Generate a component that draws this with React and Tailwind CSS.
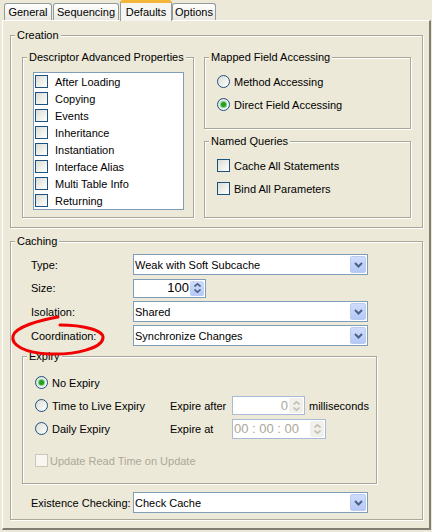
import React from "react";

const BG = "bg-[#ECE9D8]";

function Tab({ label, selected, className = "" }) {
  if (selected) {
    return (
      <div
        className={`relative z-10 -mb-[1px] h-[21px] flex items-center justify-center rounded-t-[3px] border-x border-[#919B9C] border-t-[3px] border-t-[#F5B53A] bg-[#F6F5F0] ${className}`}
      >
        {label}
      </div>
    );
  }
  return (
    <div
      className={`h-[17px] flex items-center justify-center pt-[1px] rounded-t-[3px] border border-b-0 border-[#919B9C] bg-gradient-to-b from-white to-[#E8E7E0] ${className}`}
    >
      {label}
    </div>
  );
}

function Group({ label, className = "", children }) {
  return (
    <fieldset
      className={`min-w-0 border border-[#A9A799] shadow-[inset_1px_1px_0_#fff,1px_1px_0_#fff] ${className}`}
    >
      <legend className={`ml-[4px] px-[2px] leading-[13px] ${BG}`}>{label}</legend>
      {children}
    </fieldset>
  );
}

function Check({ disabled }) {
  return (
    <span
      className={`block w-[13px] h-[13px] shrink-0 border ${
        disabled
          ? "border-[#CAC8BB] bg-[#F7F6F1]"
          : "border-[#1C5180] bg-gradient-to-br from-[#DCDCD5] to-white"
      }`}
    />
  );
}

function Radio({ checked }) {
  return (
    <span className="flex w-[13px] h-[13px] shrink-0 items-center justify-center rounded-full border border-[#1C5180] bg-gradient-to-br from-[#DCDCD5] to-white">
      {checked && (
        <span className="block w-[5px] h-[5px] rounded-full bg-[#21A121] shadow-[0_0_0_1px_#7FD27F]" />
      )}
    </span>
  );
}

function Chevron({ color = "#4D6185", up }) {
  return (
    <svg width="7" height="4" viewBox="0 0 7 4">
      <polyline
        points={up ? "0.5,3.5 3.5,0.8 6.5,3.5" : "0.5,0.5 3.5,3.2 6.5,0.5"}
        fill="none"
        stroke={color}
        strokeWidth="1.6"
      />
    </svg>
  );
}

function Combo({ value }) {
  return (
    <div className="w-[235px] h-[21px] flex items-center border border-[#7F9DB9] bg-white">
      <span className="flex-1 pl-[1px] pt-[1px]">{value}</span>
      <span className="mr-[1px] flex w-[16px] h-[17px] items-center justify-center rounded-[2px] border border-[#B9CBF3] bg-gradient-to-b from-[#CFDCFD] to-[#B5C8F6]">
        <svg width="9" height="6" viewBox="0 0 9 6">
          <polyline points="1,1 4.5,4.5 8,1" fill="none" stroke="#4D6185" strokeWidth="2" />
        </svg>
      </span>
    </div>
  );
}

function Spinner({ value, disabled, width = "w-[73px]", align = "right" }) {
  return (
    <div
      className={`${width} h-[19px] flex items-stretch border ${
        disabled ? "border-[#A9BBD4] bg-white text-[#ACA899]" : "border-[#7F9DB9] bg-white"
      }`}
    >
      <span
        className={`flex-1 flex items-center px-[1px] text-[13px] ${
          align === "right" ? "justify-end" : ""
        }`}
      >
        {value}
      </span>
      <span
        className={`my-[1px] mr-[1px] flex w-[14px] flex-col items-center justify-center gap-[2px] rounded-[2px] ${
          disabled ? "bg-[#F1F0EA]" : "bg-gradient-to-b from-[#CFDCFD] to-[#B5C8F6]"
        }`}
      >
        <Chevron up color={disabled ? "#C3C1B4" : "#4D6185"} />
        <Chevron color={disabled ? "#C3C1B4" : "#4D6185"} />
      </span>
    </div>
  );
}

function FieldRow({ label, children, className = "" }) {
  return (
    <div className={`flex items-center pl-[20px] ${className}`}>
      <span className="w-[102px] shrink-0 pt-[1px]">{label}</span>
      {children}
    </div>
  );
}

const props = [
  "After Loading",
  "Copying",
  "Events",
  "Inheritance",
  "Instantiation",
  "Interface Alias",
  "Multi Table Info",
  "Returning",
];

export default function App() {
  return (
    <div
      className={`relative w-[432px] h-[532px] overflow-hidden ${BG} text-[11px] text-black font-['Liberation_Sans',Arial,sans-serif]`}
    >
      {/* tab strip */}
      <div className="flex h-[20px] items-end pl-[4px]">
        <Tab label="General" className="w-[48px]" />
        <Tab label="Sequencing" className="ml-[1px] w-[66px]" />
        <Tab label="Defaults" selected className="ml-[1px] w-[52px]" />
        <Tab label="Options" className="w-[44px]" />
      </div>

      {/* tab page */}
      <div className="ml-[2px] w-[429px] h-[510px] border-l border-t border-white border-r-2 border-b-2 border-r-[#807E72] border-b-[#807E72] pl-[7px] pt-[8px]">
        <Group label="Creation" className="w-[413px] h-[199px]">
          <div className="mt-[9px] ml-[11px] flex gap-[10px]">
            <Group label="Descriptor Advanced Properties" className="w-[172px] h-[167px]">
              <div className="mt-[8px] ml-[10px] w-[151px] h-[138px] border border-[#7F9DB9] bg-white">
                {props.map((p) => (
                  <div key={p} className="flex h-[17px] items-center pl-[1px]">
                    <Check />
                    <span className="ml-[7px] pt-[1px]">{p}</span>
                  </div>
                ))}
              </div>
            </Group>
            <div className="flex w-[207px] flex-col gap-[6px]">
              <Group label="Mapped Field Accessing" className="h-[78px]">
                <div className="mt-[6px] pl-[12px]">
                  <div className="flex h-[23px] items-center gap-[4px]">
                    <Radio />
                    <span className="pt-[1px]">Method Accessing</span>
                  </div>
                  <div className="flex h-[23px] items-center gap-[4px]">
                    <Radio checked />
                    <span className="pt-[1px]">Direct Field Accessing</span>
                  </div>
                </div>
              </Group>
              <Group label="Named Queries" className="h-[83px]">
                <div className="mt-[6px] pl-[12px]">
                  <div className="flex h-[23px] items-center gap-[4px]">
                    <Check />
                    <span className="pt-[1px]">Cache All Statements</span>
                  </div>
                  <div className="flex h-[23px] items-center gap-[4px]">
                    <Check />
                    <span className="pt-[1px]">Bind All Parameters</span>
                  </div>
                </div>
              </Group>
            </div>
          </div>
        </Group>

        <Group label="Caching" className="mt-[7px] w-[413px] h-[285px]">
          <div className="mt-[6px] flex flex-col gap-[3px]">
            <FieldRow label="Type:" className="h-[21px]">
              <Combo value="Weak with Soft Subcache" />
            </FieldRow>
            <FieldRow label="Size:" className="h-[20px]">
              <Spinner value="100" />
            </FieldRow>
            <FieldRow label="Isolation:" className="h-[21px]">
              <Combo value="Shared" />
            </FieldRow>
            <FieldRow label="Coordination:" className="h-[21px]">
              <Combo value="Synchronize Changes" />
            </FieldRow>
          </div>

          <Group label="Expiry" className="mt-[4px] ml-[11px] w-[355px] h-[134px]">
            <div className="mt-[8px] pl-[12px]">
              <div className="flex h-[23px] items-center">
                <Radio checked />
                <span className="ml-[4px] pt-[1px]">No Expiry</span>
              </div>
              <div className="flex h-[23px] items-center">
                <div className="flex w-[135px] items-center">
                  <Radio />
                  <span className="ml-[4px] pt-[1px]">Time to Live Expiry</span>
                </div>
                <span className="w-[62px] pt-[1px]">Expire after</span>
                <Spinner value="0" disabled />
                <span className="ml-[4px] pt-[1px]">milliseconds</span>
              </div>
              <div className="flex h-[23px] items-center">
                <div className="flex w-[135px] items-center">
                  <Radio />
                  <span className="ml-[4px] pt-[1px]">Daily Expiry</span>
                </div>
                <span className="w-[62px] pt-[1px]">Expire at</span>
                <Spinner value="00 : 00 : 00" disabled width="w-[94px] h-[20px]" align="left" />
              </div>
              <div className="mt-[9px] flex h-[23px] items-center text-[#ACA899]">
                <Check disabled />
                <span className="ml-[2px] pt-[1px]">Update Read Time on Update</span>
              </div>
            </div>
          </Group>

          <FieldRow label="Existence Checking:" className="mt-[8px] h-[21px]">
            <Combo value="Check Cache" />
          </FieldRow>
        </Group>
      </div>

      {/* red annotation around "Coordination:" */}
      <svg className="pointer-events-none absolute inset-0" width="432" height="532">
        <path
          d="M60 325 C82 325 104 330 103 338 C102 348 76 355 50 354 C24 353 11 345 13 336 C15 327 40 320 58 317"
          fill="none"
          stroke="#F00000"
          strokeWidth="3"
          strokeLinecap="round"
        />
      </svg>
    </div>
  );
}
